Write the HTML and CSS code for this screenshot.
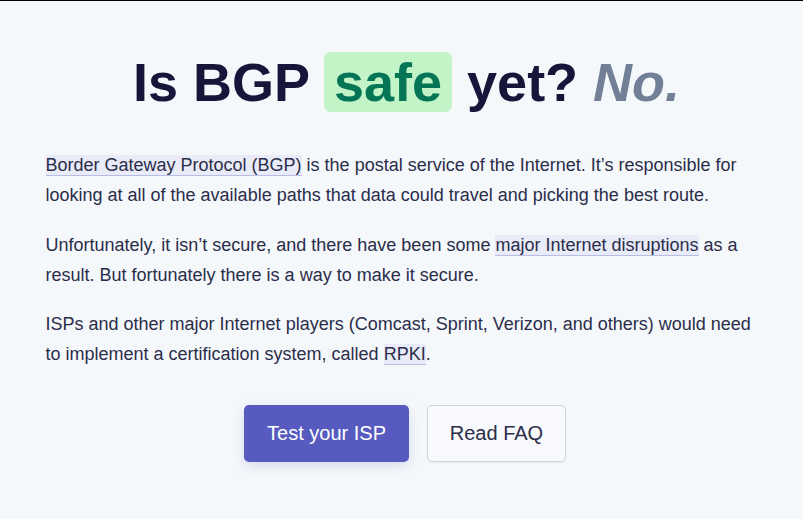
FILE: index.html
```html
<!DOCTYPE html>
<html>
<head>
<meta charset="utf-8">
<link rel="stylesheet" href="styles.css">
</head>
<body>
<main class="page">
  <h1 class="title">Is BGP <span class="safe">safe</span> yet? <em class="no">No.</em></h1>
  <p class="text"><a class="link" href="#">Border Gateway Protocol (BGP)</a> is the postal service of the Internet. It’s responsible for looking at all of the available paths that data could travel and picking the best route.</p>
  <p class="text">Unfortunately, it isn’t secure, and there have been some <a class="link" href="#">major Internet disruptions</a> as a result. But fortunately there is a way to make it secure.</p>
  <p class="text">ISPs and other major Internet players (Comcast, Sprint, Verizon, and others) would need to implement a certification system, called <a class="link" href="#">RPKI</a>.</p>
  <div class="actions">
    <a class="btn btn-primary" href="#">Test your ISP</a>
    <a class="btn btn-secondary" href="#">Read FAQ</a>
  </div>
</main>
</body>
</html>
```
FILE: styles.css
```css
html, body {
  margin: 0;
  padding: 0;
}
body {
  background: #f5f8fb;
  border-top: 1px solid #000;
  font-family: "Liberation Sans", Arial, sans-serif;
  color: #2b2d4a;
  min-height: 518px;
}
.page {
  max-width: 712px;
  margin: 0 auto;
  padding-top: 51px;
}
.title {
  margin: 0 0 38px;
  padding-left: 10px;
  text-align: center;
  font-size: 54px;
  line-height: 60px;
  font-weight: 700;
  color: #16163a;
}
.safe {
  display: inline-block;
  background: #c3f4c8;
  color: #047555;
  border-radius: 7px;
  padding: 0 10px;
  line-height: 60px;
}
.no {
  color: #718096;
  font-style: italic;
}
.text {
  margin: 0 0 19.5px;
  font-size: 18px;
  line-height: 30px;
  color: #2b2d4a;
}
.link {
  color: #2b2d4a;
  text-decoration: none;
  background: #e9ebf8;
  border-bottom: 1px solid #b9bde6;
}
.actions {
  display: flex;
  justify-content: center;
  gap: 18px;
  margin-top: 36px;
  padding-left: 7px;
}
.btn {
  display: flex;
  align-items: center;
  justify-content: center;
  height: 57px;
  box-sizing: border-box;
  border-radius: 5px;
  font-size: 20px;
  text-decoration: none;
}
.btn-primary {
  width: 165px;
  background: #575bbf;
  color: #fff;
  box-shadow: 0 4px 12px rgba(80, 90, 180, 0.18);
}
.btn-secondary {
  width: 139px;
  background: #f7f9fc;
  color: #2b2d4a;
  border: 1px solid #cfd3e6;
  box-shadow: 0 1px 2px rgba(0,0,0,0.06);
}
```
